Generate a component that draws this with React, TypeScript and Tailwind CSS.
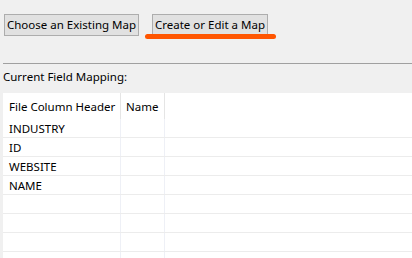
import React from "react";

const rows = ["INDUSTRY", "ID", "WEBSITE", "NAME", "", "", "", ""];

export default function App() {
  return (
    <div
      className="w-[412px] h-[258px] overflow-hidden bg-[#f0f0f0] text-[11.5px] text-black whitespace-nowrap"
      style={{ fontFamily: '"Noto Sans", "Open Sans", sans-serif' }}
    >
      {/* Top buttons */}
      <div className="flex items-start gap-[13px] pl-[4px] pt-[14px]">
        <button className="block h-[22px] w-[135px] border border-[#adadad] bg-[#e1e1e1] leading-none">
          Choose an Existing Map
        </button>
        <div className="relative">
          <button className="block h-[22px] w-[116px] border border-[#adadad] bg-[#e1e1e1] leading-none">
            Create or Edit a Map
          </button>
          <div className="absolute left-[-7px] top-[20px] h-[5px] w-[131px] rounded-full bg-[#ff5500]" />
        </div>
      </div>

      <div className="ml-[3px] mt-[27px] border-t border-[#a0a0a0]" />

      <div className="pl-[3px] pt-[4px] leading-[17px]">Current Field Mapping:</div>

      {/* Mapping table */}
      <div className="ml-[3px] mt-[8px] bg-white">
        <div className="flex h-[26px]">
          <div className="w-[118px] pl-[6px] pt-[6px] leading-[16px] border-r border-[#e5e5e5]">File Column Header</div>
          <div className="w-[44px] pl-[5px] pt-[6px] leading-[16px] border-r border-[#e5e5e5]">Name</div>
          <div className="flex-1" />
        </div>
        {rows.map((r, i) => (
          <div key={i} className="flex h-[19px] border-b border-[#ececec]">
            <div className="w-[118px] pl-[6px] leading-[19px] border-r border-[#eef0f6]">{r}</div>
            <div className="w-[44px] border-r border-[#eef0f6]" />
            <div className="flex-1" />
          </div>
        ))}
      </div>
    </div>
  );
}
